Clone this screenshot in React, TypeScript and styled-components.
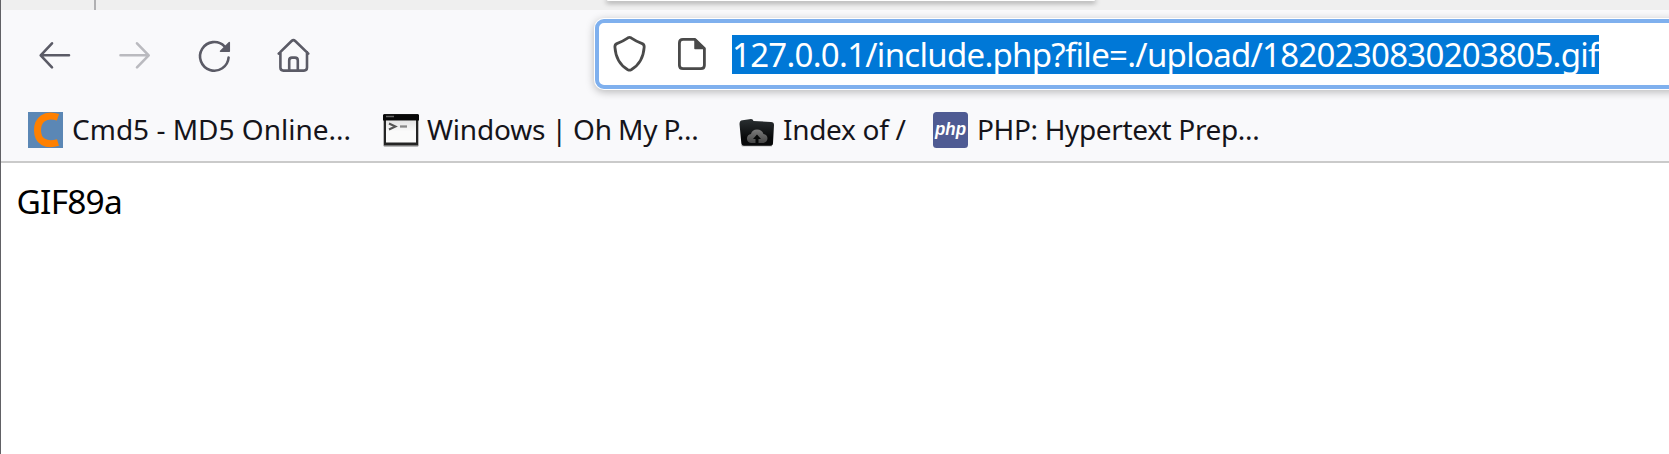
import React from "react";
import styled, { createGlobalStyle } from "styled-components";

const Global = createGlobalStyle`
  * { box-sizing: border-box; }
  body { margin: 0; overflow: hidden; background: #fff; }
`;

const Window = styled.div`
  width: 100%;
  height: 454px;
  overflow: hidden;
  display: flex;
  flex-direction: column;
  border-left: 1px solid #616165;
  background: #fff;
  font-family: "Noto Sans", "Open Sans", sans-serif;
`;

const TabStrip = styled.div`
  height: 10px;
  flex: none;
  display: flex;
  align-items: flex-start;
  background: #efefef;
  overflow: hidden;
`;

const TabDivider = styled.div`
  width: 2px;
  height: 10px;
  margin-left: 93px;
  background: #b0b0b2;
`;

const ActiveTab = styled.div`
  width: 488px;
  height: 1px;
  margin-left: 511px;
  background: #fff;
  border-radius: 0 0 8px 8px;
  box-shadow: 0 1px 5px 1px rgba(0, 0, 0, 0.4);
`;

const NavBar = styled.div`
  height: 90px;
  flex: none;
  display: flex;
  align-items: flex-start;
  background: #f9f9fb;
`;

const NavButtons = styled.div`
  display: flex;
  gap: 40px;
  padding: 25px 0 0 33px;
  width: 594px;
  flex: none;
`;

const NavIcon = styled.svg<{ $dim?: boolean }>`
  width: 40px;
  height: 40px;
  flex: none;
  fill: none;
  stroke: ${(p) => (p.$dim ? "#bababf" : "#5b5b66")};
  stroke-width: 2.6;
  stroke-linecap: round;
  stroke-linejoin: round;
`;

const UrlBar = styled.div`
  flex: 1;
  height: 70px;
  margin: 9px -20px 0 0;
  display: flex;
  align-items: center;
  padding-left: 11px;
  border: 4px solid #7fb0ee;
  border-radius: 9px;
  background: #fff;
  box-shadow: 0 0 0 1px #fff, 0 2px 8px 1px rgba(0, 0, 0, 0.27);
`;

const UrlIcon = styled.svg`
  width: 40px;
  height: 40px;
  flex: none;
  margin-right: 22px;
  fill: none;
  stroke: #4a4a4a;
  stroke-width: 2.8;
  stroke-linejoin: round;
`;

const UrlText = styled.span`
  width: 867px;
  height: 39px;
  margin-left: -2px;
  line-height: 39px;
  font-size: 33px;
  letter-spacing: -0.72px;
  white-space: nowrap;
  color: #fff;
  background: #0078d7;
`;

const BookmarksBar = styled.div`
  height: 63px;
  flex: none;
  display: flex;
  align-items: flex-start;
  padding: 12px 0 0 27px;
  background: #f9f9fb;
  border-bottom: 2px solid #cacaca;
`;

const Bookmark = styled.div<{ $w: number }>`
  width: ${(p) => p.$w}px;
  flex: none;
  display: flex;
  align-items: center;
  gap: 8px;
  height: 36px;
`;

const Favicon = styled.svg`
  width: 36px;
  height: 36px;
  flex: none;
`;

const Label = styled.span<{ $ls: number; $ws?: number }>`
  font-size: 28px;
  line-height: 34px;
  padding-bottom: 2px;
  letter-spacing: ${(p) => p.$ls}px;
  word-spacing: ${(p) => p.$ws ?? 0}px;
  white-space: nowrap;
  color: #15141a;
`;

const Page = styled.main`
  flex: 1;
  padding: 15px 15.5px;
  font-size: 33.5px;
  line-height: 46px;
  letter-spacing: -0.8px;
  color: #000;
`;

export default function App() {
  return (
    <Window>
      <Global />
      <TabStrip>
        <TabDivider />
        <ActiveTab />
      </TabStrip>
      <NavBar>
        <NavButtons>
          <NavIcon viewBox="34 35 40 40">
            <path d="M69 55.3H41M52 43.3L40.7 55.3L52 67.3" />
          </NavIcon>
          <NavIcon $dim viewBox="114 35 40 40">
            <path d="M120.5 55.3H148M137 43.3L148.7 55.3L137 67.3" />
          </NavIcon>
          <NavIcon viewBox="194 35 40 40">
            <path d="M228.6 57.5A14.3 14.3 0 1 1 224.5 46.3" />
            <path d="M229.3 42.5V51.3H220.5Z" fill="#5b5b66" strokeWidth="1.5" />
          </NavIcon>
          <NavIcon viewBox="274 35 40 40">
            <path d="M278.7 53.6L291.6 41Q293.4 39.3 295.2 41L308.3 53.6M280.4 52V67.6Q280.4 70.6 283.4 70.6H304Q307 70.6 307 67.6V52M289.2 70V60.5Q289.2 57.6 292 57.6H295Q297.8 57.6 297.8 60.5V70" />
          </NavIcon>
        </NavButtons>
        <UrlBar>
          <UrlIcon viewBox="610 34 40 40">
            <path d="M628 37.8Q629.5 37 631 37.8Q636.5 41.5 642.2 43.6Q644.3 44.5 644.2 47C643.4 59 639 65.2 631.2 69.7Q629.5 70.5 627.8 69.7C620 65.2 615.7 59 614.9 47Q614.8 44.5 616.9 43.6Q622.5 41.5 628 37.8Z" />
          </UrlIcon>
          <UrlIcon viewBox="672 34 40 40">
            <path d="M683 39.4H695L704.4 48.5V65.2Q704.4 68.7 700.9 68.7H683Q679.4 68.7 679.4 65.2V42.9Q679.4 39.4 683 39.4Z" />
            <path d="M695 39.4V48.5H704.4Z" fill="#4a4a4a" strokeWidth="1.5" />
          </UrlIcon>
          <UrlText>127.0.0.1/include.php?file=./upload/1820230830203805.gif</UrlText>
        </UrlBar>
      </NavBar>
      <BookmarksBar>
        <Bookmark $w={355}>
          <Favicon viewBox="0 0 36 36">
            <path d="M0 0H35V36H0Z" fill="#5b87b5" />
            <path d="M30 5.3C17 1 9.5 8 9.5 18.2C9.5 29.5 18 34 30 30.5" fill="none" stroke="#ff8000" strokeWidth="7" />
          </Favicon>
          <Label $ls={0}>Cmd5 - MD5 Online...</Label>
        </Bookmark>
        <Bookmark $w={356}>
          <Favicon viewBox="0 0 36 36">
            <defs>
              <linearGradient id="screen" x1="0" y1="0" x2="0" y2="1">
                <stop offset="0" stopColor="#e4e4e4" />
                <stop offset="0.5" stopColor="#fafafa" />
              </linearGradient>
            </defs>
            <rect x="0.5" y="2.5" width="35" height="32" rx="1" fill="#777" />
            <rect x="1" y="2" width="34" height="31" fill="#242424" />
            <rect x="0" y="2.5" width="36" height="6" fill="#080808" />
            <path d="M3 4.5H11" stroke="#666" strokeWidth="1.5" />
            <rect x="3" y="8.5" width="30" height="22" fill="url(#screen)" />
            <path d="M6 11.5L12.5 14.5L6 17.5" fill="none" stroke="#555" strokeWidth="2" />
            <path d="M17 14.5H24" stroke="#888" strokeWidth="2.3" />
          </Favicon>
          <Label $ls={-0.2} $ws={-0.8}>Windows | Oh My P...</Label>
        </Bookmark>
        <Bookmark $w={194}>
          <Favicon viewBox="0 0 36 36">
            <defs>
              <linearGradient id="folder" x1="0" y1="0" x2="0" y2="1">
                <stop offset="0" stopColor="#2b3032" />
                <stop offset="0.7" stopColor="#08090a" />
              </linearGradient>
              <linearGradient id="cloud" x1="0" y1="0" x2="0" y2="1">
                <stop offset="0" stopColor="#7c7c7c" />
                <stop offset="1" stopColor="#444" />
              </linearGradient>
            </defs>
            <path d="M2 33H33V34.5H3Z" fill="#bbb" />
            <path d="M0.5 12Q0.5 8.5 3.5 8.3L12 7Q14 7 14.5 9L32 10Q35 10 35 13L34 31Q34 33.7 31.5 33.7H5Q2.5 33.7 2.3 31Z" fill="url(#folder)" />
            <path d="M12 31Q7.5 30 8 26Q8.5 22.5 12 22Q13 17.5 18 17.5Q23 17.5 24.5 22Q28 22.5 28.5 26Q28.5 30 24.5 31Z" fill="url(#cloud)" />
            <path d="M18 22.5L22 27H19.5V31H16.5V27H14Z" fill="#070808" />
          </Favicon>
          <Label $ls={-0.3}>Index of /</Label>
        </Bookmark>
        <Bookmark $w={340}>
          <Favicon viewBox="0 0 36 36">
            <rect x="0" y="0" width="35" height="36" rx="3.5" fill="#4f5b93" />
            <text x="17.5" y="23" textAnchor="middle" textLength="31" lengthAdjust="spacingAndGlyphs" fontFamily="Liberation Sans, sans-serif" fontStyle="italic" fontWeight="700" fontSize="18" fill="#fff">php</text>
          </Favicon>
          <Label $ls={-0.35}>PHP: Hypertext Prep...</Label>
        </Bookmark>
      </BookmarksBar>
      <Page>GIF89a</Page>
    </Window>
  );
}
